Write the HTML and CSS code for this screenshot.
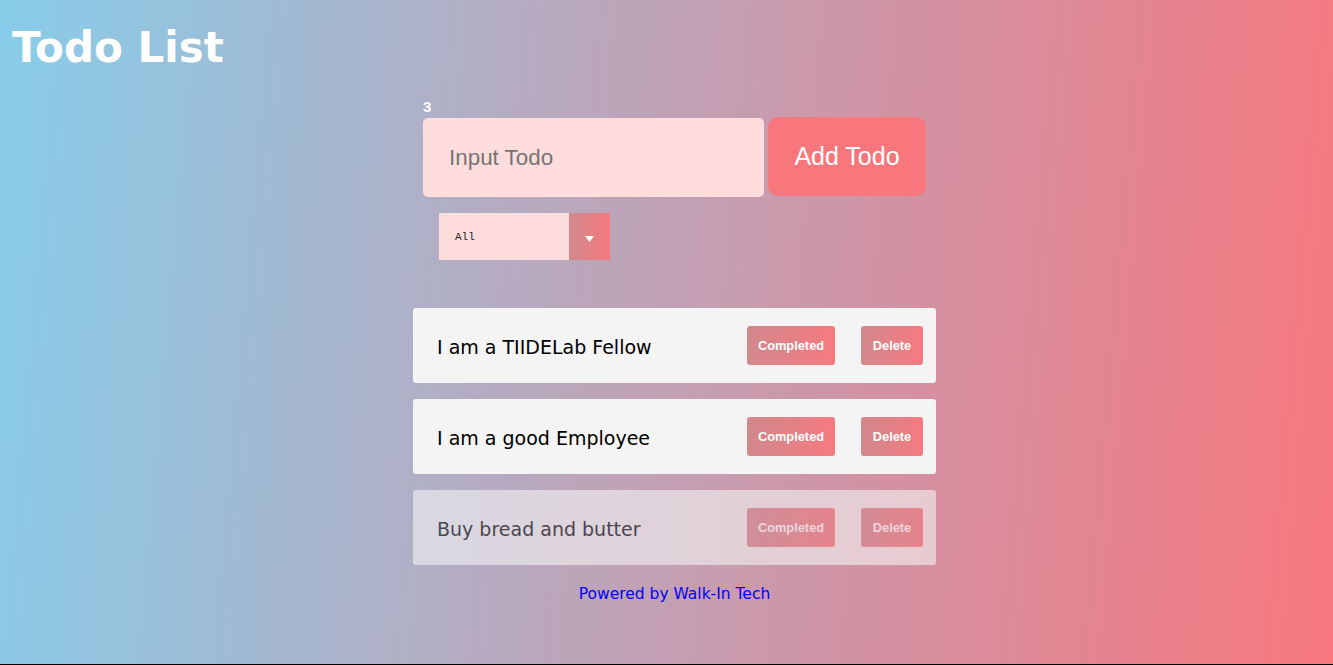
FILE: index.html
```html
<!DOCTYPE html>
<html lang="en">
<head>
<meta charset="utf-8">
<title>Todo List</title>
<link rel="stylesheet" href="styles.css">
</head>
<body>
<div class="page">
  <header class="header">
    <h1 class="title">Todo List</h1>
  </header>
  <main class="main">
    <div class="count">3</div>
    <form class="form">
      <input class="todo-input" type="text" placeholder="Input Todo">
      <button class="add-btn" type="button">Add Todo</button>
    </form>
    <div class="select">
      <span class="select-value">All</span>
      <span class="select-arrow"><svg width="9" height="6" viewBox="0 0 9 6"><path d="M0 0H9L4.5 6Z" fill="#fff"/></svg></span>
    </div>
    <ul class="list">
      <li class="item">
        <span class="item-text">I am a TIIDELab Fellow</span>
        <button class="btn btn-complete" type="button">Completed</button>
        <button class="btn btn-delete" type="button">Delete</button>
      </li>
      <li class="item">
        <span class="item-text">I am a good Employee</span>
        <button class="btn btn-complete" type="button">Completed</button>
        <button class="btn btn-delete" type="button">Delete</button>
      </li>
      <li class="item item-done">
        <span class="item-text">Buy bread and butter</span>
        <button class="btn btn-complete" type="button">Completed</button>
        <button class="btn btn-delete" type="button">Delete</button>
      </li>
    </ul>
    <p class="footer">Powered by Walk-In Tech</p>
  </main>
</div>
</body>
</html>
```

FILE: styles.css
```css
html {
  margin: 0;
  background: #000;
}
body {
  margin: 0;
  font-family: "DejaVu Sans", sans-serif;
}
.page {
  height: calc(100vh - 1px);
  background: linear-gradient(95deg, #87cdea 0%, #b2aec4 35%, #d68f9f 70%, #f7777d 100%);
  overflow: hidden;
}
.header {
  padding: 18px 0 0 12px;
  height: 78px;
  box-sizing: border-box;
}
.title {
  margin: 0;
  color: #fff;
  font-size: 42px;
  line-height: 60px;
  font-weight: bold;
}
.main {
  width: 539px;
  margin: 0 auto;
  padding-left: 16px;
  box-sizing: border-box;
  display: flex;
  flex-direction: column;
}
.count {
  margin-left: 10px;
  margin-top: 18px;
  color: #fff;
  font-family: "Liberation Sans", sans-serif;
  font-weight: bold;
  font-size: 15px;
  line-height: 22px;
}
.form {
  display: flex;
  gap: 4px;
  margin: 0 0 0 10px;
  align-items: flex-start;
}
.todo-input {
  width: 341px;
  height: 79px;
  box-sizing: border-box;
  border: none;
  border-radius: 5px;
  background: #ffdddd;
  padding: 0 26px;
  font-family: "Liberation Sans", sans-serif;
  font-size: 22.4px;
  color: #333;
  outline: none;
}
.todo-input::placeholder {
  color: #757575;
}
.add-btn {
  width: 158px;
  height: 79px;
  margin-top: -1px;
  border: none;
  border-radius: 10px;
  background: #f7777d;
  color: #fff;
  font-family: "Liberation Sans", sans-serif;
  font-size: 25px;
  padding: 0;
}
.select {
  display: flex;
  width: 171px;
  height: 47px;
  margin: 16px 0 0 26px;
}
.select-value {
  flex: 1;
  background: #ffdddd;
  font-family: "Liberation Mono", monospace;
  font-size: 11px;
  color: #222;
  padding-left: 16px;
  display: flex;
  align-items: center;
}
.select-arrow {
  width: 41px;
  background: linear-gradient(90deg, #d2888c, #f4797e);
  display: flex;
  align-items: center;
  justify-content: center;
  padding-top: 4px;
  box-sizing: border-box;
}
.list {
  list-style: none;
  margin: 48px 0 0 0;
  padding: 0;
  display: flex;
  flex-direction: column;
  gap: 16px;
}
.item {
  height: 75px;
  background: #f4f4f4;
  border-radius: 3px;
  display: flex;
  align-items: center;
  padding: 0 13px 0 24px;
}
.item-text {
  flex: 1;
  font-size: 19px;
  color: #000;
  padding-top: 2px;
}
.btn {
  height: 39px;
  border: none;
  border-radius: 3px;
  background: linear-gradient(90deg, #d2888c, #f47a80);
  color: #fff;
  font-family: "Liberation Sans", sans-serif;
  font-weight: bold;
  font-size: 12.8px;
  padding: 0;
}
.btn-complete {
  width: 88px;
}
.btn-delete {
  width: 62px;
  margin-left: 26px;
}
.item-done {
  opacity: 0.6;
}
.footer {
  margin: 19px 0 0 0;
  text-align: center;
  color: #0000ff;
  font-size: 15.5px;
  line-height: 20px;
}
```
